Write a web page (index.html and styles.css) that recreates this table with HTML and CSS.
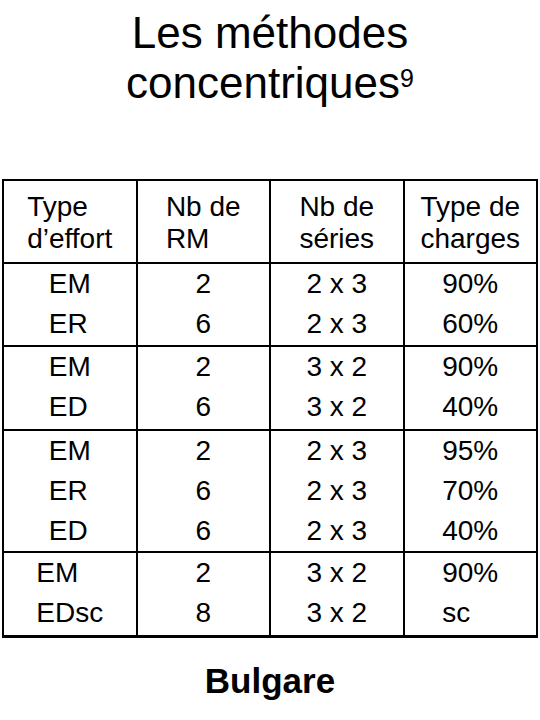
FILE: index.html
```html
<!DOCTYPE html>
<html lang="fr">
<head>
<meta charset="utf-8">
<title>Les méthodes concentriques</title>
<link rel="stylesheet" href="styles.css">
</head>
<body>
<h1 class="title">Les méthodes<br>concentriques<sup class="note">9</sup></h1>
<table class="grid">
  <thead>
    <tr class="head">
      <th><div class="box"><div>Type</div><div>d’effort</div></div></th>
      <th><div class="box"><div>Nb de</div><div>RM</div></div></th>
      <th><div class="box"><div>Nb de</div><div>séries</div></div></th>
      <th><div class="box"><div>Type de</div><div>charges</div></div></th>
    </tr>
  </thead>
  <tbody>
    <tr class="g g1">
      <td><div class="box"><div>EM</div><div>ER</div></div></td>
      <td><div class="box"><div>2</div><div>6</div></div></td>
      <td><div class="box"><div>2 x 3</div><div>2 x 3</div></div></td>
      <td><div class="box"><div>90%</div><div>60%</div></div></td>
    </tr>
    <tr class="g g2">
      <td><div class="box"><div>EM</div><div>ED</div></div></td>
      <td><div class="box"><div>2</div><div>6</div></div></td>
      <td><div class="box"><div>3 x 2</div><div>3 x 2</div></div></td>
      <td><div class="box"><div>90%</div><div>40%</div></div></td>
    </tr>
    <tr class="g g3">
      <td><div class="box"><div>EM</div><div>ER</div><div>ED</div></div></td>
      <td><div class="box"><div>2</div><div>6</div><div>6</div></div></td>
      <td><div class="box"><div>2 x 3</div><div>2 x 3</div><div>2 x 3</div></div></td>
      <td><div class="box"><div>95%</div><div>70%</div><div>40%</div></div></td>
    </tr>
    <tr class="g g4 last">
      <td><div class="box"><div>EM</div><div>EDsc</div></div></td>
      <td><div class="box"><div>2</div><div>8</div></div></td>
      <td><div class="box"><div>3 x 2</div><div>3 x 2</div></div></td>
      <td><div class="box"><div>90%</div><div>sc</div></div></td>
    </tr>
  </tbody>
</table>
<p class="caption">Bulgare</p>
</body>
</html>
```

FILE: styles.css
```css
html, body {
  margin: 0;
  padding: 0;
  background: #ffffff;
  color: #000000;
  font-family: "Liberation Sans", Arial, sans-serif;
}

.title {
  margin: 0;
  padding-top: 8px;
  font-size: 44px;
  line-height: 50px;
  font-weight: normal;
  text-align: center;
}

.note {
  font-size: 25px;
  line-height: 0;
  vertical-align: 11px;
}

.grid {
  margin: 71px 0 0 2px;
  width: 536px;
  table-layout: fixed;
  border-collapse: separate;
  border-spacing: 0;
  border-top: 2px solid #000;
  border-left: 2px solid #000;
  font-size: 28px;
}

.grid th,
.grid td {
  padding: 0;
  border-right: 2px solid #000;
  border-bottom: 2px solid #000;
  text-align: center;
  vertical-align: top;
  font-weight: normal;
}

.box {
  display: inline-block;
  text-align: left;
}

.head th {
  height: 83px;
  box-sizing: border-box;
  padding-top: 10px;
  line-height: 32px;
}

.g td {
  line-height: 40px;
}

.g1 td {
  height: 83px;
  box-sizing: border-box;
}

.g2 td {
  height: 84px;
  box-sizing: border-box;
}

.g3 td {
  height: 122px;
  box-sizing: border-box;
}

.g4 td {
  height: 85px;
  box-sizing: border-box;
  border-bottom-width: 3px;
}

.caption {
  margin: 23px 0 0;
  font-size: 35px;
  line-height: 40px;
  font-weight: bold;
  text-align: center;
}
```
